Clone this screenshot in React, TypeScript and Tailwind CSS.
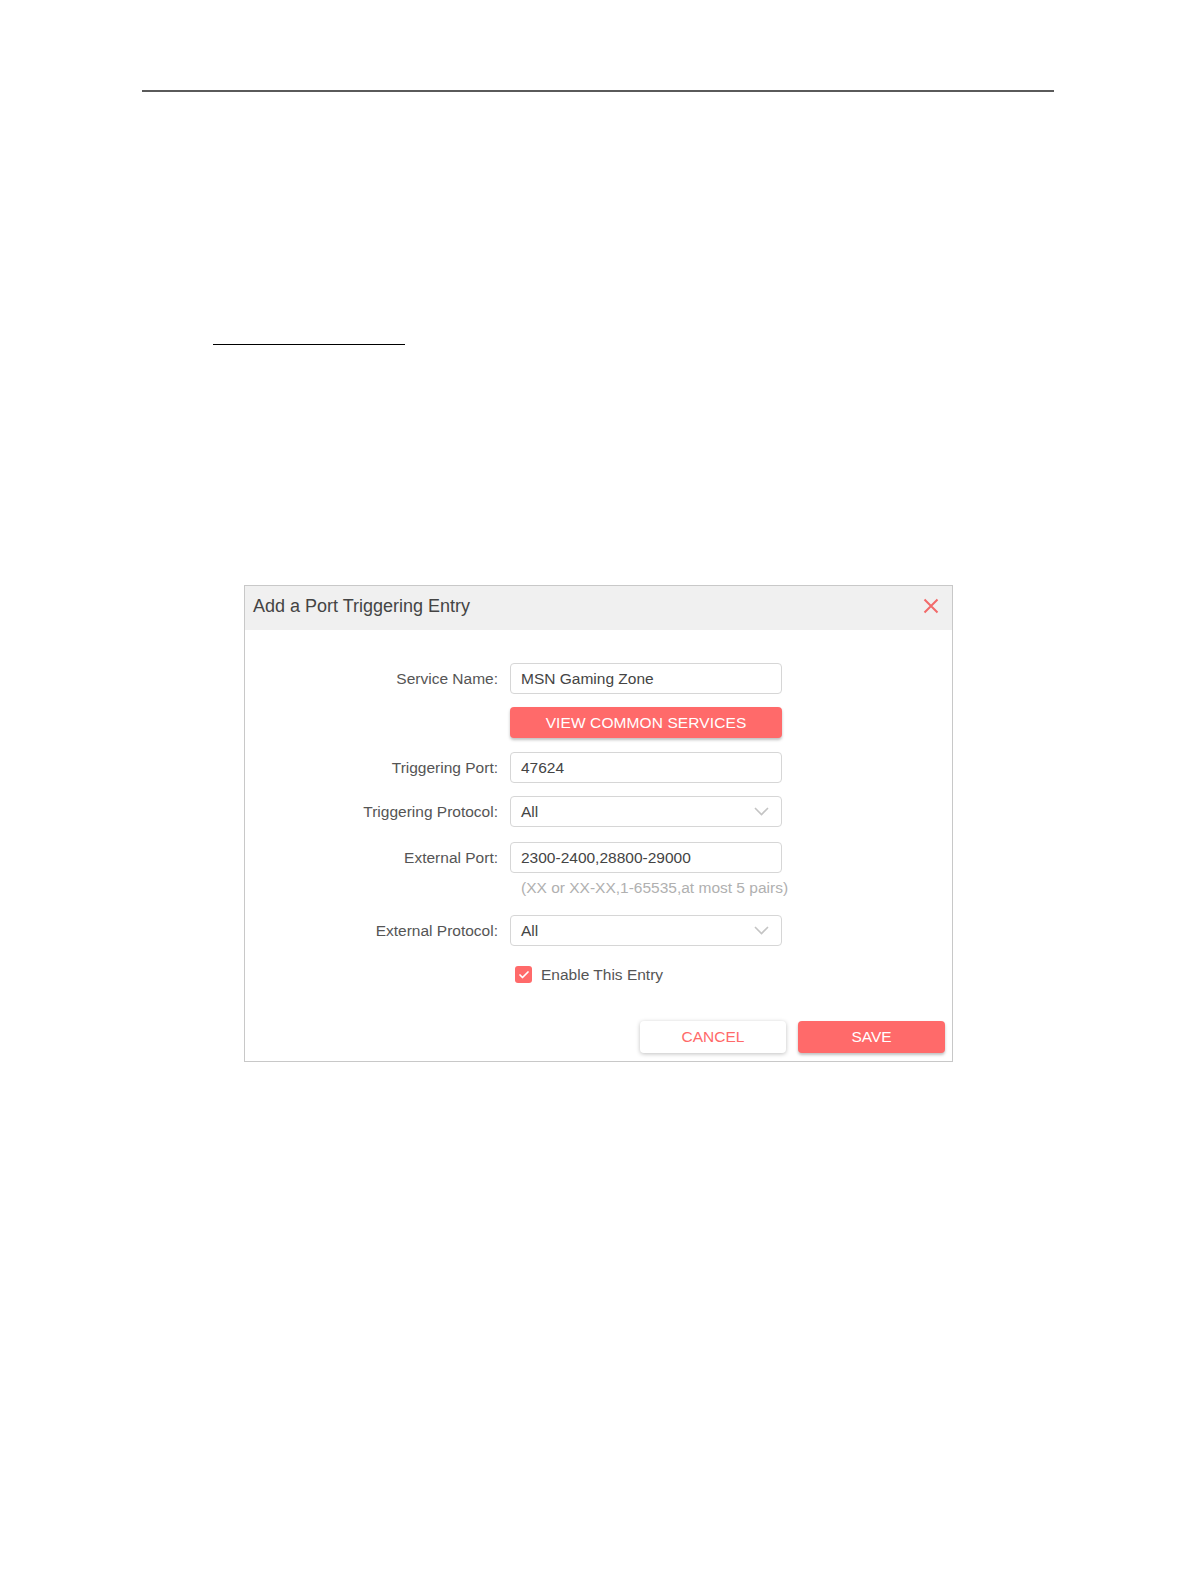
import { Check } from "lucide-react";

const font = "font-['Liberation_Sans',Arial,sans-serif]";

function Label({ text }: { text: string }) {
  return (
    <div className="w-[253px] shrink-0 text-right text-[15.5px] text-[#555]">
      {text}
    </div>
  );
}

function Field({ label, value, select }: { label: string; value: string; select?: boolean }) {
  return (
    <div className="flex h-[31px] items-center">
      <Label text={label} />
      <div className="ml-[12px] flex h-[31px] w-[272px] items-center justify-between rounded-[4px] border border-[#d6d6d6] bg-white pl-[10px] pr-[12px] text-[15.5px] text-[#444]">
        <span>{value}</span>
        {select && (
          <svg width="15" height="9" viewBox="0 0 15 9" fill="none">
            <path d="M1 1l6.5 6.5L14 1" stroke="#c4c4c4" strokeWidth="1.6" />
          </svg>
        )}
      </div>
    </div>
  );
}

export default function App() {
  return (
    <div className={`h-[1582px] w-[1196px] bg-white ${font}`}>
      <div className="px-[142px] pt-[90px]">
        <div className="h-[2px] bg-[#5a5a5a]" />
      </div>

      <div className="ml-[213px] mt-[252px] h-[1px] w-[192px] bg-black" />

      <div className="ml-[244px] mt-[240px] w-[709px] border border-[#c8c8c8] bg-white">
        <div className="flex h-[44px] items-center justify-between bg-[#f0f0f0] pb-[4px] pl-[8px] pr-[13px]">
          <span className="text-[18px] text-[#444]">Add a Port Triggering Entry</span>
          <svg width="16" height="16" viewBox="0 0 16 16">
            <path d="M1.5 1.5l13 13M14.5 1.5l-13 13" stroke="#f26a6a" strokeWidth="2" />
          </svg>
        </div>

        <div className="pb-[8px] pr-[7px] pt-[33px]">
          <Field label="Service Name:" value="MSN Gaming Zone" />

          <div className="mt-[13px] flex">
            <div className="w-[253px] shrink-0" />
            <button className="ml-[12px] h-[31px] w-[272px] rounded-[4px] bg-[#ff6a6a] text-[15.5px] tracking-[0.1px] text-white shadow-[0_2px_3px_rgba(0,0,0,0.25)]">
              VIEW COMMON SERVICES
            </button>
          </div>

          <div className="mt-[14px]">
            <Field label="Triggering Port:" value="47624" />
          </div>
          <div className="mt-[13px]">
            <Field label="Triggering Protocol:" value="All" select />
          </div>
          <div className="mt-[15px]">
            <Field label="External Port:" value="2300-2400,28800-29000" />
          </div>
          <div className="mt-[6px] flex h-[18px] items-center">
            <div className="w-[253px] shrink-0" />
            <span className="ml-[23px] text-[15.5px] text-[#b0b0b0]">
              (XX or XX-XX,1-65535,at most 5 pairs)
            </span>
          </div>
          <div className="mt-[18px]">
            <Field label="External Protocol:" value="All" select />
          </div>

          <div className="mt-[20px] flex h-[17px] items-center">
            <div className="w-[253px] shrink-0" />
            <div className="ml-[17px] flex h-[17px] w-[17px] items-center justify-center rounded-[3px] bg-[#ff6a6a]">
              <Check className="h-[12px] w-[12px] text-white" strokeWidth={3.5} />
            </div>
            <span className="ml-[9px] text-[15.5px] text-[#555]">Enable This Entry</span>
          </div>

          <div className="mt-[38px] flex justify-end gap-[12px]">
            <button className="h-[32px] w-[146px] rounded-[4px] bg-white text-[15.5px] text-[#ff6a6a] shadow-[0_1px_4px_rgba(0,0,0,0.25)]">
              CANCEL
            </button>
            <button className="h-[32px] w-[147px] rounded-[4px] bg-[#ff6a6a] text-[15.5px] text-white shadow-[0_2px_3px_rgba(0,0,0,0.25)]">
              SAVE
            </button>
          </div>
        </div>
      </div>
    </div>
  );
}
